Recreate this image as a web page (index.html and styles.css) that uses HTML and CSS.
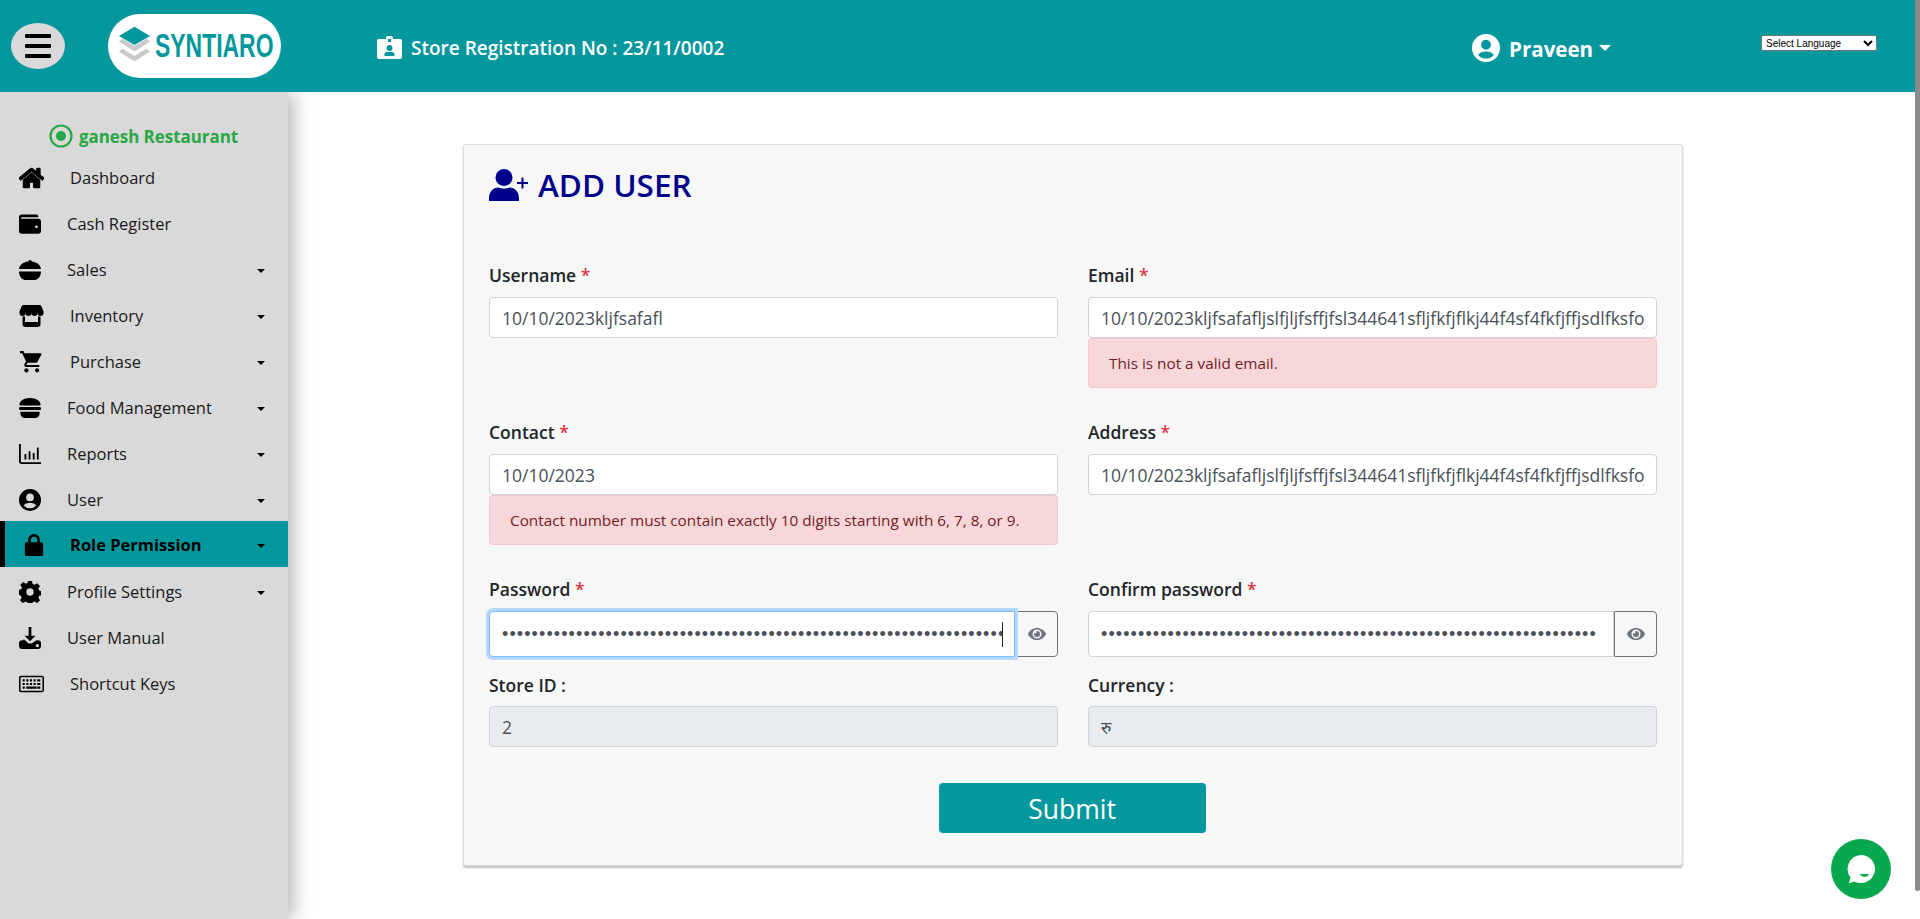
FILE: index.html
```html
<!DOCTYPE html>
<html lang="en">
<head>
<meta charset="utf-8">
<title>Add User</title>
<link rel="stylesheet" href="styles.css">
</head>
<body>
<div class="page">
  <header class="topbar">
    <button class="menu-toggle" aria-label="Menu"><span></span><span></span><span></span></button>
    <div class="logo">
      <svg class="logo-mark" viewBox="0 0 36 42" aria-hidden="true">
        <path fill="#04989e" d="M18 0 35 10 18 20 1 10z"/>
        <path fill="#c9c9c9" d="M5 13 18 21 31 13 35 16 18 27 1 16z"/>
        <path fill="#c9c9c9" d="M5 24 18 32 31 24 35 27 18 38 1 27z"/>
      </svg>
      <span class="logo-text">SYNTIARO</span>
    </div>
    <div class="store-reg">
      <svg class="store-icon" viewBox="0 0 25 23" aria-hidden="true">
        <path fill="#fff" fill-rule="evenodd" d="M2 3h7V2a2 2 0 0 1 2-2h3a2 2 0 0 1 2 2v1h7a2 2 0 0 1 2 2v16a2 2 0 0 1-2 2H2a2 2 0 0 1-2-2V5a2 2 0 0 1 2-2zM11 3v3h3V3zM12.500 9a3 3 0 1 0 0 6 3 3 0 0 0 0-6zM7.500 20h10v-1.500a2.500 2.500 0 0 0-2.500-2.500h-5a2.500 2.500 0 0 0-2.500 2.500z"/>
      </svg>
      <span>Store Registration No : 23/11/0002</span>
    </div>
    <div class="user-menu">
      <svg class="user-icon" viewBox="0 0 24 24" aria-hidden="true">
        <path fill="#fff" fill-rule="evenodd" d="M12 0a12 12 0 1 1 0 24 12 12 0 0 1 0-24zm0 5a4.200 4.200 0 1 0 0 8.400A4.200 4.200 0 0 0 12 5zm0 10c-3 0-5.500 1-6.800 3a9 9 0 0 0 13.600 0c-1.300-2-3.800-3-6.800-3z"/>
      </svg>
      <span class="user-name">Praveen</span>
      <span class="user-caret"></span>
    </div>
    <select class="lang"><option>Select Language</option></select>
  </header>

  <div class="body-row">
    <aside class="sidebar">
      <div class="store-name">
        <svg class="store-dot" viewBox="0 0 24 24" aria-hidden="true">
          <circle cx="12" cy="12" r="10.500" fill="none" stroke="#28a745" stroke-width="2.200"/>
          <circle cx="12" cy="12" r="5" fill="#28a745"/>
        </svg>
        <span>ganesh Restaurant</span>
      </div>
      <nav class="nav">
        <a class="nav-item wide">
          <svg class="nav-icon" viewBox="0 0 576 512"><path stroke="#000" stroke-width="24" d="M280.370 148.260 96 300.110V464a16 16 0 0 0 16 16l112.060-.29a16 16 0 0 0 15.920-16V368a16 16 0 0 1 16-16h64a16 16 0 0 1 16 16v95.640a16 16 0 0 0 16 16.050L464 480a16 16 0 0 0 16-16V300L295.670 148.260a12.190 12.190 0 0 0-15.300 0zM571.600 251.470 488 182.560V44.050a12 12 0 0 0-12-12h-56a12 12 0 0 0-12 12v72.610L318.470 43a48 48 0 0 0-61 0L4.340 251.470a12 12 0 0 0-1.600 16.900l25.500 31A12 12 0 0 0 45.150 301l235.220-193.740a12.190 12.190 0 0 1 15.300 0L530.900 301a12 12 0 0 0 16.900-1.600l25.500-31a12 12 0 0 0-1.700-16.930z"/></svg>
          <span class="nav-label">Dashboard</span>
        </a>
        <a class="nav-item">
          <svg class="nav-icon" viewBox="0 0 24 21"><path fill-rule="evenodd" d="M3 0h16a2 2 0 0 1 2 2v1H3a.8.8 0 0 0 0 1.800h18A3 3 0 0 1 24 7.800V18a3 3 0 0 1-3 3H3a3 3 0 0 1-3-3V3a3 3 0 0 1 3-3zm16 12a1.500 1.500 0 1 0 0 3 1.500 1.500 0 0 0 0-3z"/></svg>
          <span class="nav-label">Cash Register</span>
        </a>
        <a class="nav-item has-sub">
          <svg class="nav-icon" viewBox="0 0 24 22"><path d="M12 0a2 2 0 0 1 2 1.700C19.500 2.400 23.500 5.500 24 10H0C.5 5.500 4.500 2.400 10 1.700A2 2 0 0 1 12 0zM0 12.500h24C24 18 20.500 22 16 22H8C3.500 22 0 18 0 12.500z"/></svg>
          <span class="nav-label">Sales</span>
          <span class="nav-caret"></span>
        </a>
        <a class="nav-item has-sub wide">
          <svg class="nav-icon" viewBox="0 0 24 22"><path d="M4 0h16a2 2 0 0 1 2 1.500L24 6.500V8a3 3 0 0 1-6 0 3 3 0 0 1-6 0 3 3 0 0 1-6 0 3 3 0 0 1-6 0V6.500L2 1.500A2 2 0 0 1 4 0zM3 11.500h2.500V17h13v-5.500H21V19a3 3 0 0 1-3 3H6a3 3 0 0 1-3-3z"/></svg>
          <span class="nav-label">Inventory</span>
          <span class="nav-caret"></span>
        </a>
        <a class="nav-item has-sub wide">
          <svg class="nav-icon" viewBox="1 2 21.500 20.500"><path d="M7 18c-1.100 0-1.990.9-1.990 2S5.900 22 7 22s2-.9 2-2-.9-2-2-2zM1 2v2h2l3.600 7.590-1.350 2.450c-.16.28-.25.61-.25.96 0 1.100.9 2 2 2h12v-2H7.420c-.14 0-.25-.11-.25-.25l.03-.12.9-1.630h7.450c.75 0 1.410-.41 1.750-1.030l3.580-6.490c.08-.14.12-.31.12-.48 0-.55-.45-1-1-1H5.210l-.94-2H1zm16 16c-1.100 0-1.990.9-1.990 2s.89 2 1.990 2 2-.9 2-2-.9-2-2-2z"/></svg>
          <span class="nav-label">Purchase</span>
          <span class="nav-caret"></span>
        </a>
        <a class="nav-item has-sub">
          <svg class="nav-icon" viewBox="0 0 24 24"><path d="M12 1c6.500 0 11 3 11.500 7 .1.700-.4 1.200-1 1.200H1.500c-.6 0-1.100-.5-1-1.200C1 4 5.500 1 12 1zM1.500 11h21a1.500 1.500 0 0 1 0 3.200h-21a1.500 1.500 0 0 1 0-3.200zM1.500 16h21v2c0 2.800-2.200 5-5 5h-11c-2.800 0-5-2.200-5-5z"/></svg>
          <span class="nav-label">Food Management</span>
          <span class="nav-caret"></span>
        </a>
        <a class="nav-item has-sub">
          <svg class="nav-icon" viewBox="0 0 24 22"><path d="M0 0h2v19a1 1 0 0 0 1 1h21v2H3a3 3 0 0 1-3-3zM6 11h2v6H6zM10.500 8h2v9h-2zM15 10h2v7h-2zM19.500 4h2v13h-2z"/></svg>
          <span class="nav-label">Reports</span>
          <span class="nav-caret"></span>
        </a>
        <a class="nav-item has-sub">
          <svg class="nav-icon" viewBox="0 0 24 24"><path fill-rule="evenodd" d="M12 0a12 12 0 1 1 0 24 12 12 0 0 1 0-24zm0 5a4.200 4.200 0 1 0 0 8.400A4.200 4.200 0 0 0 12 5zm0 10c-3 0-5.500 1-6.800 3a9 9 0 0 0 13.600 0c-1.300-2-3.800-3-6.800-3z"/></svg>
          <span class="nav-label">User</span>
          <span class="nav-caret"></span>
        </a>
        <a class="nav-item has-sub active">
          <svg class="nav-icon nav-icon-lock" viewBox="0 0 20 24"><path fill-rule="evenodd" d="M10 0a6.500 6.500 0 0 1 6.500 6.500V9H18a2 2 0 0 1 2 2v11a2 2 0 0 1-2 2H2a2 2 0 0 1-2-2V11a2 2 0 0 1 2-2h1.500V6.500A6.500 6.500 0 0 1 10 0zm0 3a3.500 3.500 0 0 0-3.500 3.500V9h7V6.500A3.500 3.500 0 0 0 10 3z"/></svg>
          <span class="nav-label">Role Permission</span>
          <span class="nav-caret"></span>
        </a>
        <a class="nav-item has-sub">
          <svg class="nav-icon" viewBox="0 0 24 24"><path fill-rule="evenodd" d="M9.800 0h4.400l.7 3.300 2 .9 2.900-1.800 3.100 3.100-1.800 2.900.9 2 3.300.7v4.400l-3.300.7-.9 2 1.800 2.900-3.100 3.100-2.900-1.800-2 .9-.7 3.300H9.800l-.7-3.300-2-.9-2.900 1.800-3.100-3.100 1.800-2.900-.9-2L-1 14.200V9.800l3.300-.7.9-2-1.800-2.900 3.100-3.100 2.900 1.800 2-.9zM12 8a4 4 0 1 0 0 8 4 4 0 0 0 0-8z"/></svg>
          <span class="nav-label">Profile Settings</span>
          <span class="nav-caret"></span>
        </a>
        <a class="nav-item">
          <svg class="nav-icon" viewBox="0 0 24 24"><path fill-rule="evenodd" d="M10.500 0h3v9.500H18l-6 6-6-6h4.500zM5 13l5.500 5h3L19 14.500h1.500A3.500 3.500 0 0 1 24 18v2.500a3.500 3.500 0 0 1-3.500 3.500h-17A3.500 3.500 0 0 1 0 20.500V18a3.500 3.500 0 0 1 3.500-3.500H5zm15 5.500a1.800 1.800 0 1 0 0 3.600 1.800 1.800 0 0 0 0-3.600z"/></svg>
          <span class="nav-label">User Manual</span>
        </a>
        <a class="nav-item wide">
          <svg class="nav-icon" viewBox="0 0 24 16"><path fill-rule="evenodd" d="M2 0h20a2 2 0 0 1 2 2v12a2 2 0 0 1-2 2H2a2 2 0 0 1-2-2V2a2 2 0 0 1 2-2zm0 1.500a.5.500 0 0 0-.5.500v12a.5.500 0 0 0 .5.500h20a.5.500 0 0 0 .5-.5V2a.5.500 0 0 0-.5-.5zM3.500 3.500h2v2h-2zm3.500 0h2v2H7zm3.500 0h2v2h-2zm3.500 0h2v2h-2zm3.500 0h3v2h-3zM3.500 7h2v2h-2zM7 7h2v2H7zm3.500 0h2v2h-2zM14 7h2v2h-2zm3.500 0h3v2h-3zm-14 3.500h2v2h-2zm3.500 0h10v2H7zm10.500 0h3v2h-3z"/></svg>
          <span class="nav-label">Shortcut Keys</span>
        </a>
      </nav>
    </aside>

    <main class="content">
      <section class="card">
        <h1 class="card-title">
          <svg class="title-icon" viewBox="0 0 40 32" aria-hidden="true">
            <circle cx="15" cy="8.500" r="8.500" fill="#00008b"/>
            <path fill="#00008b" d="M0 32v-3c0-6.500 5-10.500 9-10.500 4 1.500 8 1.500 12 0 4 0 9 4 9 10.500v3z"/>
            <path fill="none" stroke="#00008b" stroke-width="2" d="M33.500 8.500v11M28 14h11"/>
          </svg>
          ADD USER
        </h1>
        <form class="form">
          <div class="field">
            <label class="label">Username <span class="req">*</span></label>
            <input class="input" type="text" value="10/10/2023kljfsafafl">
          </div>
          <div class="field">
            <label class="label">Email <span class="req">*</span></label>
            <input class="input" type="text" value="10/10/2023kljfsafafljslfjljfsffjfsl344641sfljfkfjflkj44f4sf4fkfjffjsdlfksfojdkfjsd">
            <div class="alert">This is not a valid email.</div>
          </div>
          <div class="field">
            <label class="label">Contact <span class="req">*</span></label>
            <input class="input" type="text" value="10/10/2023">
            <div class="alert">Contact number must contain exactly 10 digits starting with 6, 7, 8, or 9.</div>
          </div>
          <div class="field">
            <label class="label">Address <span class="req">*</span></label>
            <input class="input" type="text" value="10/10/2023kljfsafafljslfjljfsffjfsl344641sfljfkfjflkj44f4sf4fkfjffjsdlfksfojdkfjsd">
          </div>
          <div class="field field-pass">
            <label class="label">Password <span class="req">*</span></label>
            <div class="pass-group">
              <div class="pass-wrap focused">
                <input class="input pass-input" type="password" value="abcdefghijklmnopqrstuvwxyzabcdefghijklmnopqrstuvwxyzabcdefghijklmnop">
                <span class="caret"></span>
              </div>
              <button type="button" class="eye-btn" aria-label="Show password">
                <svg class="eye" viewBox="0 0 576 512"><path d="M572.520 241.400C518.290 135.590 410.930 64 288 64S57.680 135.640 3.480 241.410a32.350 32.350 0 0 0 0 29.190C57.710 376.410 165.070 448 288 448s230.320-71.640 284.520-177.410a32.350 32.350 0 0 0 0-29.190zM288 400a144 144 0 1 1 144-144 143.930 143.930 0 0 1-144 144zm0-240a95.310 95.310 0 0 0-25.310 3.790 47.850 47.850 0 0 1-66.900 66.900A95.780 95.780 0 1 0 288 160z"/></svg>
              </button>
            </div>
          </div>
          <div class="field field-pass">
            <label class="label">Confirm password <span class="req">*</span></label>
            <div class="pass-group">
              <div class="pass-wrap">
                <input class="input pass-input" type="password" value="abcdefghijklmnopqrstuvwxyzabcdefghijklmnopqrstuvwxyzabcdefghijklmno">
              </div>
              <button type="button" class="eye-btn" aria-label="Show password">
                <svg class="eye" viewBox="0 0 576 512"><path d="M572.520 241.400C518.290 135.590 410.930 64 288 64S57.680 135.640 3.480 241.410a32.350 32.350 0 0 0 0 29.190C57.710 376.410 165.070 448 288 448s230.320-71.640 284.520-177.410a32.350 32.350 0 0 0 0-29.190zM288 400a144 144 0 1 1 144-144 143.930 143.930 0 0 1-144 144zm0-240a95.310 95.310 0 0 0-25.310 3.790 47.850 47.850 0 0 1-66.900 66.900A95.780 95.780 0 1 0 288 160z"/></svg>
              </button>
            </div>
          </div>
          <div class="field field-ro">
            <label class="label">Store ID :</label>
            <input class="input" type="text" value="2" disabled>
          </div>
          <div class="field field-ro">
            <label class="label">Currency :</label>
            <input class="input" type="text" value="रु" disabled>
          </div>
          <div class="actions"><button type="button" class="submit">Submit</button></div>
        </form>
      </section>
    </main>
  </div>
</div>
<div class="scroll-thumb"></div>
<button class="chat" aria-label="Chat">
  <svg viewBox="0 0 30 32" class="chat-icon"><path fill="#fff" d="M15 1a14 14 0 1 1-6.500 26.400L2.700 29.300l2-5.600A14 14 0 0 1 15 1z"/><path fill="#08a84f" d="M14 20h9c-.8 2-2.500 2.800-4.300 2.800S14.800 22 14 20z"/></svg>
</button>
</body>
</html>
```

FILE: styles.css
```css
* { box-sizing: border-box; }
html, body { margin: 0; height: 100%; overflow: hidden; background: #fff; }
body { font-family: "Open Sans", "Noto Sans", "Noto Sans CJK SC", sans-serif; color: #212529; font-size: 16px; }
.page { display: flex; flex-direction: column; height: 919px; margin-right: 5px; }

.topbar { display: flex; align-items: center; flex: 0 0 92px; background: #04989e; color: #fff; padding-left: 11px; position: relative; z-index: 1; }
.menu-toggle { width: 54px; height: 46px; border: 0; border-radius: 50%; background: #d9d9d9; display: flex; flex-direction: column; justify-content: center; align-items: center; gap: 6px; padding: 0; }
.menu-toggle span { width: 26px; height: 4px; background: #000; border-radius: 1px; }
.logo { width: 173px; height: 64px; margin-left: 43px; border-radius: 32px; background: #fff; display: flex; align-items: center; padding-left: 10px; overflow: hidden; }
.logo-mark { width: 33px; height: 40px; flex: none; }
.logo-text { font-family: "Liberation Sans", sans-serif; font-weight: 700; font-size: 33px; color: #04989e; display: inline-block; transform: scaleX(.695); transform-origin: left center; margin-left: 4px; white-space: nowrap; }
.store-reg { display: flex; align-items: center; gap: 9px; margin-left: 96px; font-size: 19px; font-weight: 600; padding-top: 3px; }
.store-icon { width: 25px; height: 23px; flex: none; margin-top: -1px; }
.user-menu { display: flex; align-items: center; margin-left: auto; padding-top: 6px; }
.user-icon { width: 28px; height: 28px; margin-top: -3px; }
.user-name { margin-left: 9px; font-size: 20.500px; font-weight: 700; }
.user-caret { margin-left: 6px; margin-top: -3px; border: 6px solid transparent; border-top-color: #fff; border-bottom: 0; }
.lang { align-self: flex-start; margin: 35px 38px 0 150px; width: 116px; height: 16px; font: 10px "Liberation Sans", sans-serif; color: #000; background: #fff; border: 1px solid #767676; border-radius: 2px; padding: 0; }

.body-row { display: flex; flex: 1; min-height: 0; }
.sidebar { flex: 0 0 288px; background: #d9d9d9; box-shadow: 6px 0 18px rgba(0, 0, 0, .28); position: relative; padding-top: 27px; }
.store-name { display: flex; align-items: center; justify-content: center; gap: 6px; height: 34px; padding-right: 1px; color: #28a745; font-weight: 700; font-size: 16.900px; }
.store-dot { width: 24px; height: 24px; }
.nav { display: flex; flex-direction: column; }
.nav-item { display: flex; align-items: center; height: 46px; padding: 3px 23px 0 19px; color: #1a1a1a; font-size: 16.500px; }
.nav-icon { width: 22px; height: 22px; flex: none; fill: #000; }
.wide .nav-icon { width: 25px; }
.nav-label { margin-left: 26px; white-space: nowrap; }
.nav-caret { margin-left: auto; border: 4.500px solid transparent; border-top-color: #000; border-bottom: 0; margin-top: 3px; }
.nav-item.active { background: #04989e; border-left: 5px solid #000; font-weight: 700; color: #000; padding-top: 1px; }
.nav-icon-lock { width: 20px; }

.content { flex: 1; min-width: 0; padding: 52px 232px 0 175px; position: relative; }
.card { background: #f7f7f7; border: 1px solid #dcdcdc; border-radius: 3px; box-shadow: 0 2px 2px rgba(0, 0, 0, .25); padding: 0 25px; height: 722px; }
.card-title { margin: 0; display: flex; align-items: center; gap: 9px; height: 118px; padding-bottom: 39px; font-size: 31.500px; font-weight: 600; color: #00008b; }
.title-icon { width: 40px; height: 32px; flex: none; }
.form { display: grid; grid-template-columns: 1fr 1fr; column-gap: 30px; }
.field { min-width: 0; margin-bottom: 32px; }
.field-pass { margin-bottom: 16px; }
.field-ro { margin-bottom: 36px; }
.label { display: block; font-weight: 600; font-size: 17.500px; line-height: 24px; margin-bottom: 10px; }
.field-ro .label { margin-bottom: 9px; }
.req { color: #dc3545; }
.input { display: block; width: 100%; height: 41px; padding: 0 12px; border: 1px solid #ced4da; border-radius: 4px; background: #fff; color: #495057; font: inherit; font-size: 17.500px; }
.input:disabled { background: #e9ecef; }
.alert { height: 50px; background: #f8d7da; border: 1px solid #f5c6cb; border-radius: 4px; color: #721c24; font-size: 15.300px; line-height: 48px; padding-left: 20px; }
.pass-group { display: flex; height: 46px; }
.pass-wrap { flex: 1; min-width: 0; position: relative; }
.pass-input { height: 46px; border-radius: 4px 0 0 4px; font-family: "Liberation Sans", sans-serif; font-size: 18px; letter-spacing: 1.100px; }
.focused .pass-input { border-color: #80bdff; box-shadow: 0 0 0 3px #b3d7ff; }
.caret { position: absolute; right: 12px; top: 11px; width: 1px; height: 25px; background: #222; }
.eye-btn { flex: 0 0 43px; border: 1px solid #6c757d; border-radius: 0 4px 4px 0; background: #f7f7f7; display: flex; align-items: center; justify-content: center; padding: 0; }
.eye { width: 18px; height: 16px; fill: #6c757d; }
.actions { grid-column: 1 / -1; display: flex; justify-content: center; padding-right: 2px; }
.submit { width: 267px; height: 50px; border: 0; border-radius: 4px; background: #04989e; color: #fff; font: inherit; font-size: 26.500px; padding-top: 2px; }

.scroll-thumb { position: fixed; top: 0; right: 0; width: 5px; height: 891px; background: #8a8a8a; border-radius: 0 0 2px 2px; }
.chat { position: fixed; left: 1831px; top: 839px; width: 60px; height: 60px; border: 0; border-radius: 50%; background: #08a84f; padding: 0; display: flex; align-items: center; justify-content: center; }
.chat-icon { width: 30px; height: 32px; margin-top: 2px; }
```
